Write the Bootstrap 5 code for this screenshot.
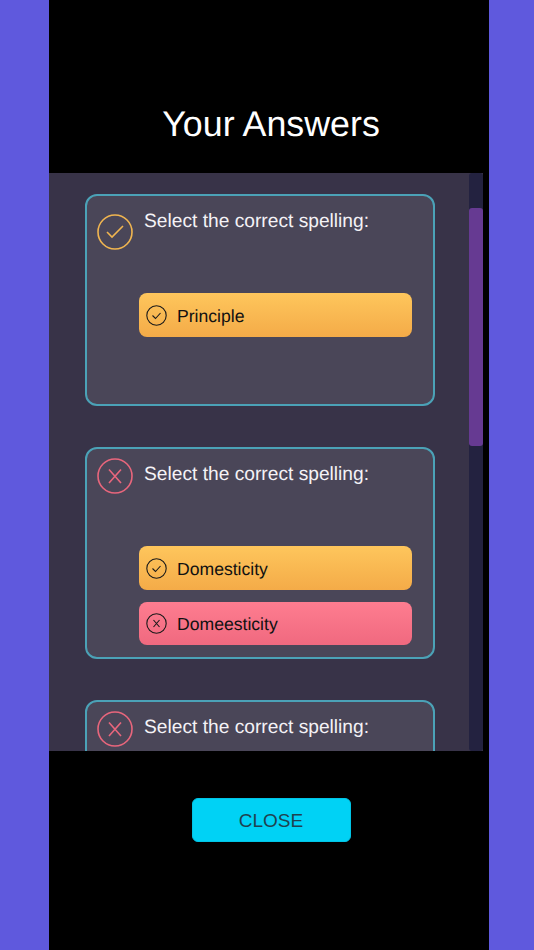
<!DOCTYPE html>
<html lang="en">
<head>
<meta charset="utf-8">
<title>Your Answers</title>
<link rel="stylesheet" href="https://cdn.jsdelivr.net/npm/bootstrap@5.3.0/dist/css/bootstrap.min.css">
<style>
html,body{height:100%;margin:0;background:#5f59dd;font-family:"Liberation Sans",Arial,sans-serif;text-rendering:geometricPrecision;}
.stage{width:440px;height:950px;margin-left:49px;background:#000;}
.head-zone{height:173px;padding-top:103px;padding-left:4px;}
.head-zone h1{font-size:35.8px;line-height:42px;margin:0;color:#fff;font-weight:400;text-align:center;}
.panel-zone{height:578px;width:434px;background:#383348;overflow:hidden;}
.list-zone{width:420px;padding:21px 0 0 36px;}
.q-card{width:350px;height:212px;margin-bottom:41px;background:#4a4658;border:2px solid #4ba2b7;border-radius:12px;padding:9px 0 0 10px;}
.q-head{height:46px;}
.q-mark{width:36px;height:36px;flex:none;display:block;}
.q-mark-low{margin-top:9px;}
.q-text{font-size:19.2px;line-height:24px;color:#f4f2f6;margin:5px 0 0 11px;white-space:nowrap;}
.q-answers{width:273px;margin:42px 0 0 42px;gap:12px;}
.ans{height:44px;border-radius:8px;padding-left:7px;gap:10px;font-size:17.6px;color:#111;}
.ans span{padding-top:2px;}
.ans-right{background:linear-gradient(#fec65c,#f4ab48);}
.ans-wrong{background:linear-gradient(#fe7d90,#f0697f);height:43px;}
.ans svg{width:21px;height:21px;flex:none;display:block;}
.track{width:14px;height:578px;background:#232240;border-radius:3px;padding-top:35px;}
.thumb{height:238px;background:#663a92;border-radius:3px;}
.foot-zone{height:199px;padding:47px 0 0 4px;}
.close-btn{width:159px;height:44px;padding:2px 0 0;background:#00d2f5;border:1px solid #00c4e6;border-radius:6px;font-size:19px;color:#1f4250;}
.close-btn:hover{background:#00d2f5;color:#1f4250;border-color:#00c4e6;}
</style>
</head>
<body>
<div class="stage d-flex flex-column">
  <div class="head-zone"><h1>Your Answers</h1></div>
  <div class="panel-zone d-flex">
    <div class="list-zone">
      <div class="q-card">
        <div class="q-head d-flex align-items-start">
          <svg class="q-mark q-mark-low" viewBox="0 0 36 36" fill="none" stroke="#f0b550" stroke-width="1.6"><circle cx="18" cy="18" r="17"/><path d="M10 18l5 5 11-11"/></svg>
          <div class="q-text">Select the correct spelling:</div>
        </div>
        <div class="q-answers d-flex flex-column">
          <div class="ans ans-right d-flex align-items-center">
            <svg viewBox="0 0 21 21" fill="none" stroke="#1a1a1a" stroke-width="1.1"><circle cx="10.500" cy="10.500" r="9.700"/><path d="M6.500 10.500l3 3 5-5.500"/></svg>
            <span>Principle</span>
          </div>
        </div>
      </div>
      <div class="q-card">
        <div class="q-head d-flex align-items-start">
          <svg class="q-mark" viewBox="0 0 36 36" fill="none" stroke="#e8667c" stroke-width="1.6"><circle cx="18" cy="18" r="17"/><path d="M12 11.500l12 13.500M24 11.500l-12 13.500"/></svg>
          <div class="q-text">Select the correct spelling:</div>
        </div>
        <div class="q-answers d-flex flex-column">
          <div class="ans ans-right d-flex align-items-center">
            <svg viewBox="0 0 21 21" fill="none" stroke="#1a1a1a" stroke-width="1.1"><circle cx="10.500" cy="10.500" r="9.700"/><path d="M6.500 10.500l3 3 5-5.500"/></svg>
            <span>Domesticity</span>
          </div>
          <div class="ans ans-wrong d-flex align-items-center">
            <svg viewBox="0 0 21 21" fill="none" stroke="#1a1a1a" stroke-width="1.1"><circle cx="10.500" cy="10.500" r="9.700"/><path d="M7.500 7l6 7M13.500 7l-6 7"/></svg>
            <span>Domeesticity</span>
          </div>
        </div>
      </div>
      <div class="q-card">
        <div class="q-head d-flex align-items-start">
          <svg class="q-mark" viewBox="0 0 36 36" fill="none" stroke="#e8667c" stroke-width="1.6"><circle cx="18" cy="18" r="17"/><path d="M12 11.500l12 13.500M24 11.500l-12 13.500"/></svg>
          <div class="q-text">Select the correct spelling:</div>
        </div>
      </div>
    </div>
    <div class="track ms-auto"><div class="thumb"></div></div>
  </div>
  <div class="foot-zone d-flex justify-content-center align-items-start">
    <button type="button" class="btn close-btn">CLOSE</button>
  </div>
</div>
<script src="https://cdn.jsdelivr.net/npm/bootstrap@5.3.0/dist/js/bootstrap.bundle.min.js"></script>
</body>
</html>
